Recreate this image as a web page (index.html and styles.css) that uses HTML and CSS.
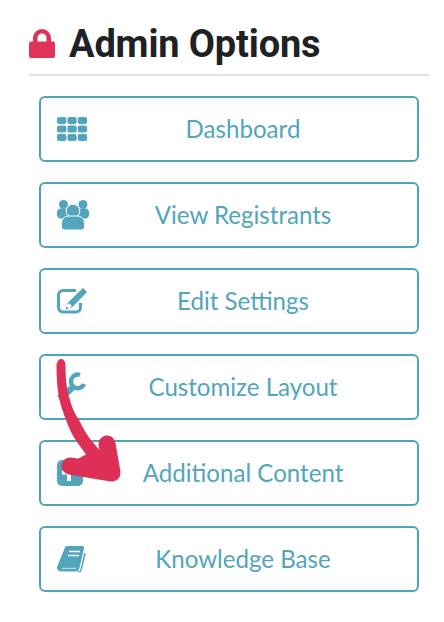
FILE: index.html
```html
<!DOCTYPE html>
<html lang="en">
<head>
    <meta charset="UTF-8">
    <title>Admin Options</title>
    <link rel="stylesheet" href="styles.css">
</head>
<body>
    <div class="panel">
        <header class="title">
            <svg class="lock" viewBox="0 0 26 29">
                <path d="M6.250 13V9a6.750 6.750 0 0 1 13.500 0V13" fill="none" stroke="#df3358" stroke-width="4.500"/>
                <rect x="0" y="12.500" width="26" height="16.500" rx="2" fill="#df3358"/>
            </svg>
            <h1>Admin Options</h1>
        </header>

        <nav class="options">
            <a class="option">
                <svg class="icon" viewBox="0 0 30 30">
                    <rect x="0" y="3" width="9.300" height="7" rx="2"/>
                    <rect x="10.400" y="3" width="9.300" height="7" rx="2"/>
                    <rect x="20.800" y="3" width="9.300" height="7" rx="2"/>
                    <rect x="0" y="11.500" width="9.300" height="7" rx="2"/>
                    <rect x="10.400" y="11.500" width="9.300" height="7" rx="2"/>
                    <rect x="20.800" y="11.500" width="9.300" height="7" rx="2"/>
                    <rect x="0" y="20" width="9.300" height="7" rx="2"/>
                    <rect x="10.400" y="20" width="9.300" height="7" rx="2"/>
                    <rect x="20.800" y="20" width="9.300" height="7" rx="2"/>
                </svg>
                <span class="label">Dashboard</span>
            </a>
            <a class="option">
                <svg class="icon" viewBox="0 0 30 30">
                    <circle cx="6.500" cy="4.500" r="4.500"/>
                    <circle cx="26" cy="4.500" r="4.500"/>
                    <rect x="0" y="8.500" width="11" height="10" rx="4"/>
                    <rect x="21" y="8.500" width="11" height="10" rx="4"/>
                    <circle class="cut" cx="16" cy="11" r="6.800"/>
                    <path class="cut" d="M4.500 27V23a7 7 0 0 1 7-7h9a7 7 0 0 1 7 7v4a3 3 0 0 1-3 3H7.500a3 3 0 0 1-3-3z"/>
                </svg>
                <span class="label">View Registrants</span>
            </a>
            <a class="option">
                <svg class="icon" viewBox="0 0 30 30">
                    <path class="line" d="M19 4.500H6a4.500 4.500 0 0 0-4.500 4.500v12.500a4.500 4.500 0 0 0 4.500 4.500h13a4.500 4.500 0 0 0 4.500-4.500V17"/>
                    <path d="M26 2l4 4-15 15.500-6.500 2 2-6.500z"/>
                    <path class="notch" d="M10.500 18.500l3 3"/>
                </svg>
                <span class="label">Edit Settings</span>
            </a>
            <a class="option">
                <svg class="icon" viewBox="0 0 30 30">
                    <path d="M0 24l15-12 4 4.500-14 13z"/>
                    <path class="line wrench" d="M27 12a6.800 6.800 0 1 1-4-9"/>
                </svg>
                <span class="label">Customize Layout</span>
            </a>
            <a class="option">
                <svg class="icon" viewBox="0 0 30 30">
                    <rect x="0" y="2" width="26" height="26" rx="5"/>
                    <path class="notch" d="M12 8v15M5 14.500h14"/>
                </svg>
                <span class="label">Additional Content</span>
            </a>
            <a class="option">
                <svg class="icon" viewBox="0 0 30 30">
                    <path d="M8 3.500a2 2 0 0 1 2-1.500h15a2 2 0 0 1 2 2.500L22 25.500a2.500 2.500 0 0 1-2.500 2H4a4 4 0 0 1-4-4.500z"/>
                    <path class="line thin" d="M28 9l-3.800 16.500a3 3 0 0 1-2.700 2.500"/>
                    <path class="page" d="M12 7.500h11M11 11.500h11"/>
                    <path class="page hair" d="M5 24.300h14"/>
                </svg>
                <span class="label">Knowledge Base</span>
            </a>
        </nav>
    </div>

    <!-- hand drawn arrow over the list -->
    <svg class="arrow" viewBox="0 0 444 622">
        <path d="M56.500 366C57 357 65 357 65.500 365C65.500 378 66.500 390 70 400C72 408 75 414 79 420C83 428 87 435 91 440L106 458L110 475L72 470L90 460L77 442C72 435 69 428 66 420C63 412 61 406 59.500 400C57.500 390 56.500 380 56.500 366Z"/>
        <path d="M98 448L112 473L72 462Z"/>
        <path class="head" d="M107 444l5 29-42-7"/>
    </svg>
</body>
</html>
```

FILE: styles.css
```css
* {
    box-sizing: border-box;
    margin: 0;
    padding: 0;
}

body {
    background: #fff;
    font-family: 'Lato', sans-serif;
    position: relative;
    width: 444px;
    height: 622px;
    overflow: hidden;
}

.panel {
    padding: 22px 15px 0 29px;
}

.title {
    display: flex;
    align-items: center;
    gap: 14px;
    height: 54px;
    border-bottom: 2px solid #e3e3e3;
    padding-bottom: 9px;
}

.lock {
    width: 26px;
    height: 29px;
    flex: none;
}

h1 {
    font-family: 'Roboto', sans-serif;
    font-weight: 700;
    font-size: 38px;
    line-height: 44px;
    letter-spacing: -0.15px;
    color: #202124;
}

.options {
    display: flex;
    flex-direction: column;
    gap: 20px;
    margin: 20px 10px 0;
}

.option {
    display: flex;
    align-items: center;
    height: 66px;
    padding: 0 18px 0 16px;
    border: 2px solid #4fa3b8;
    border-radius: 6px;
    color: #52a5ba;
}

.icon {
    width: 30px;
    height: 30px;
    flex: none;
    fill: #52a5ba;
    overflow: visible;
}

.icon .cut {
    stroke: #fff;
    stroke-width: 1;
}

.icon .line {
    fill: none;
    stroke: #52a5ba;
    stroke-width: 3;
}

.icon .wrench {
    stroke-width: 4.500;
}

.icon .thin {
    stroke-width: 1.500;
}

.icon .notch {
    fill: none;
    stroke: #fff;
    stroke-width: 4;
}

.icon .page {
    fill: none;
    stroke: #fff;
    stroke-width: 1.500;
}

.icon .hair {
    stroke-width: 0.700;
}

.label {
    flex: 1;
    text-align: center;
    font-size: 24.1px;
    line-height: 30px;
}

.arrow {
    position: absolute;
    top: 0;
    left: 0;
    width: 444px;
    height: 622px;
    fill: #dc3057;
    pointer-events: none;
}

.arrow .head {
    fill: none;
    stroke: #dc3057;
    stroke-width: 17;
    stroke-linecap: round;
    stroke-linejoin: round;
}
```
